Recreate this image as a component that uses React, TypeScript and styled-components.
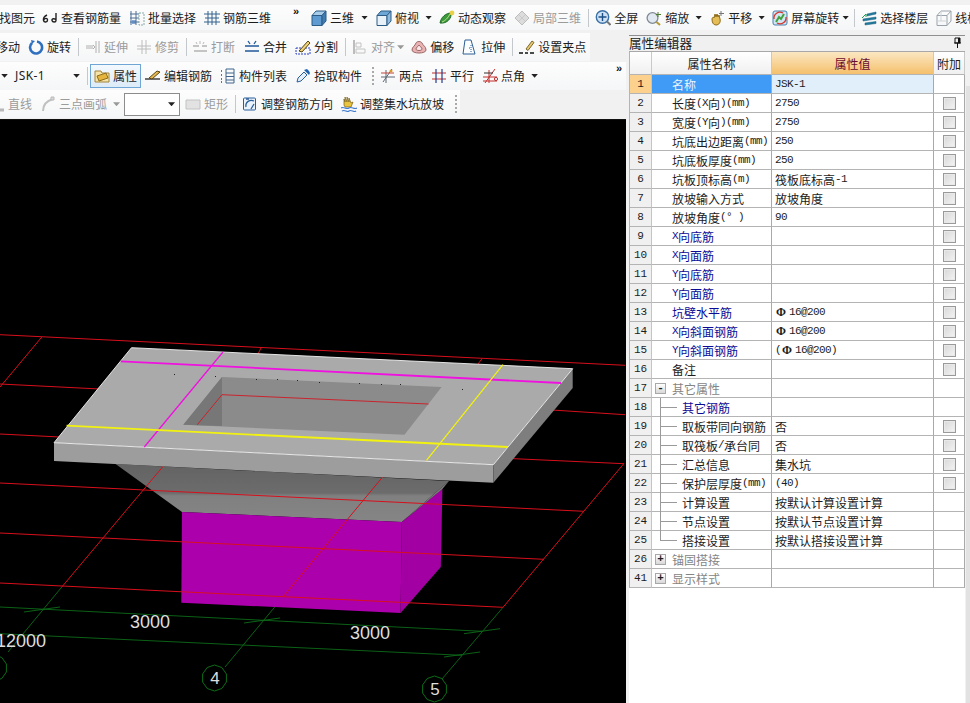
import React from "react";
import styled, { createGlobalStyle } from "styled-components";

const Global = createGlobalStyle`
  html, body { margin: 0; padding: 0; background: #f0f0f0; }
  #root { width: 970px; height: 703px; overflow: hidden; }
  * { box-sizing: border-box; }
`;

const CJK = `"Noto Sans CJK SC", "Liberation Sans", sans-serif`;

const Page = styled.div`
  width: 970px;
  height: 703px;
  overflow: hidden;
  display: flex;
  flex-direction: column;
  font-family: ${CJK};
  font-size: 12px;
  color: #1c1c1c;
  background: #f1f1f1;
`;
const TopRow = styled.div`
  height: 33px;
  padding-top: 5px;
  flex: none;
`;
const Body = styled.div`
  flex: 1;
  display: flex;
  min-height: 0;
`;
const LeftColumn = styled.div`
  width: 626px;
  flex: none;
  display: flex;
  flex-direction: column;
  overflow: hidden;
`;
const Strip = styled.div<{ $w: number; $h: number }>`
  width: ${(p) => p.$w}px;
  height: ${(p) => p.$h}px;
  flex: none;
  display: flex;
  align-items: center;
  white-space: nowrap;
  overflow: hidden;
  background: linear-gradient(#fdfdfd, #f5f6f7);
`;
const ToolRow = styled.div`
  height: 28.5px;
  flex: none;
  display: flex;
  align-items: center;
`;
const Tool = styled.div<{ $gap: number; $active?: boolean; $off?: boolean }>`
  margin-left: ${(p) => p.$gap}px;
  flex: none;
  display: flex;
  align-items: center;
  gap: 3px;
  line-height: 16px;
  color: ${(p) => (p.$off ? "#9b9b9b" : "#1c1c1c")};
  ${(p) =>
    p.$active
      ? `padding: 3px 3px; border: 1px solid #6fa6d6; background: linear-gradient(#f4f9fe, #dcebf8);`
      : ""}
`;
const IconBox = styled.svg`
  width: 16px;
  height: 16px;
  flex: none;
  display: block;
`;
const Caret = styled.span<{ $gap: number; $off?: boolean }>`
  margin-left: ${(p) => p.$gap}px;
  flex: none;
  width: 7px;
  height: 4px;
  clip-path: polygon(0 0, 100% 0, 50% 100%);
  background: ${(p) => (p.$off ? "#999" : "#222")};
`;
const Sep = styled.span<{ $gap: number }>`
  margin-left: ${(p) => p.$gap}px;
  width: 1px;
  height: 18px;
  flex: none;
  background: #c4c8cc;
`;
const Grip = styled.span<{ $gap: number }>`
  margin-left: ${(p) => p.$gap}px;
  width: 2px;
  height: 18px;
  flex: none;
  background: repeating-linear-gradient(#a9a9a9 0 2px, transparent 2px 4px);
`;
const Chevron = styled.span<{ $gap: number }>`
  margin-left: ${(p) => p.$gap}px;
  width: 8px;
  flex: none;
  align-self: flex-start;
  margin-top: 1px;
  font: bold 11px/10px "Liberation Sans", sans-serif;
  color: #111;
`;
const ComboText = styled.span<{ $gap: number; $w: number }>`
  margin-left: ${(p) => p.$gap}px;
  width: ${(p) => p.$w}px;
  flex: none;
  font: 12px "Noto Sans", sans-serif;
  letter-spacing: 0.4px;
`;
const Combo = styled.div<{ $gap: number; $w: number }>`
  margin-left: ${(p) => p.$gap}px;
  width: ${(p) => p.$w}px;
  height: 23px;
  flex: none;
  display: flex;
  align-items: center;
  justify-content: flex-end;
  padding-right: 4px;
  background: #fff;
  border: 1px solid #8d8d8d;
`;
const Viewport = styled.div`
  flex: 1;
  min-height: 0;
  background: #000;
  border-top: 1px solid #111;
`;
const Drawing = styled.svg`
  display: block;
  width: 626px;
  height: 585px;
`;

/* right side */
const Panel = styled.div`
  flex: 1;
  display: flex;
  flex-direction: column;
  padding: 2px 0 0 3px;
  position: relative;
`;
const PanelTitle = styled.div`
  height: 16px;
  margin-right: 5px;
  flex: none;
  display: flex;
  align-items: center;
  justify-content: space-between;
  padding: 0 3px 2px 0;
  border-top: 1px solid #8f8f8f;
  font-size: 12.6px;
  line-height: 14px;
  background: #f0f0f0;
`;
const PanelBody = styled.div`
  flex: 1;
  margin-right: 5px;
  background: #fff;
  border-top: 1px solid #a8a8a8;
`;
const ScrollEdge = styled.div`
  position: absolute;
  top: 53px;
  right: 0;
  bottom: 0;
  width: 4px;
  background: #e2e2e2;
`;
const Grid = styled.div`
  display: grid;
  grid-template-columns: 22px 120px 162px 31px;
  grid-template-rows: 23px;
  grid-auto-rows: 19px;
  border-left: 1px solid #b4b4b4;
  width: 336px;
`;
const HeadCell = styled.div<{ $hot?: boolean }>`
  height: 23px;
  display: flex;
  align-items: center;
  justify-content: center;
  border-right: 1px solid #c9c9c9;
  border-bottom: 1px solid #b4b4b4;
  color: ${(p) => (p.$hot ? "#6b0a2e" : "#1c1c1c")};
  background: ${(p) =>
    p.$hot
      ? "linear-gradient(#fbe7c3, #f4c06c)"
      : "linear-gradient(#ffffff, #f0f0f0)"};
`;
const NumCell = styled.div<{ $on?: boolean }>`
  display: flex;
  align-items: center;
  justify-content: center;
  font: 11px "Liberation Mono", monospace;
  background: ${(p) => (p.$on ? "#fcd18e" : "#f0f0f0")};
  border-right: 1px solid #c4c4c4;
  border-bottom: 1px solid #b4b4b4;
`;
const NameCell = styled.div<{ $kind: string; $indent: number; $on?: boolean }>`
  display: flex;
  align-items: center;
  position: relative;
  padding-left: ${(p) => p.$indent}px;
  white-space: nowrap;
  border-right: 1px solid #a9a9a9;
  border-bottom: 1px solid #b4b4b4;
  background: ${(p) => (p.$on ? "#3f9bf5" : "#fff")};
  color: ${(p) =>
    p.$on ? "#eaf4ff" : p.$kind === "blue" ? "#0b0b96" : p.$kind === "group" ? "#858585" : "#1c1c1c"};
`;
const ValueCell = styled.div<{ $on?: boolean }>`
  display: flex;
  align-items: center;
  padding-left: 3px;
  white-space: pre;
  border-right: 1px solid #a9a9a9;
  border-bottom: 1px solid #b4b4b4;
  background: ${(p) => (p.$on ? "#e1effb" : "#fff")};
`;
const ExtraCell = styled.div`
  display: flex;
  align-items: center;
  justify-content: center;
  border-right: 1px solid #a9a9a9;
  border-bottom: 1px solid #b4b4b4;
  background: #fff;
`;
const Check = styled.span`
  width: 13px;
  height: 13px;
  border: 1px solid #9a9a9a;
  background: linear-gradient(135deg, #d8d8d8, #f4f4f4);
  box-shadow: inset 0 0 0 1px #e9e9e9;
`;
const Latin = styled.span`
  font: 11px "Liberation Mono", monospace;
  letter-spacing: -0.6px;
`;
const Rebar = styled.span`
  font: bold 12px "Liberation Serif", serif;
  margin: 0 3px 0 1px;
`;
const Expander = styled.span`
  position: absolute;
  left: 3px;
  top: 4px;
  width: 11px;
  height: 11px;
  border: 1px solid #a8a8a8;
  background: linear-gradient(#fff, #d8d8d8);
  font: bold 11px/9px "Liberation Mono", monospace;
  text-align: center;
  color: #222;
`;
const TreeV = styled.span<{ $last?: boolean }>`
  position: absolute;
  left: 8px;
  top: 0;
  height: ${(p) => (p.$last ? 10 : 19)}px;
  width: 1px;
  background: #9a9a9a;
`;
const TreeH = styled.span`
  position: absolute;
  left: 8px;
  top: 9px;
  width: 17px;
  height: 1px;
  background: #9a9a9a;
`;

const I = (p: { children: React.ReactNode }) => (
  <IconBox viewBox="0 0 16 16" fill="none">{p.children}</IconBox>
);

const cube = (front: string, top: string, side: string) => (
  <I>
    <path d="M1 5.5h10v10H1z" fill={front} stroke="#2c5c86" />
    <path d="M1 5.5 5 1h10l-4 4.5z" fill={top} stroke="#2c5c86" />
    <path d="M11 5.5 15 1v10l-4 4.5z" fill={side} stroke="#2c5c86" />
  </I>
);

const icons: Record<string, React.ReactNode> = {
  glasses: (
    <I>
      <path d="M5 5C3 6 1 8 1.5 10.5c.5 2 4 2 4-.5s-3-2-4 .5M14 3v7.5c0 2-3.5 2-4 0s3-2.5 4-.5" stroke="#222" strokeWidth="1.4" />
    </I>
  ),
  batch: (
    <I>
      <path d="M2 1v14M7 1v14M1 4h9M1 8h9M1 12h9" stroke="#4d6f95" />
      <path d="M10 3h5v12h-5z" stroke="#8aa" strokeDasharray="2 1" />
      <path d="M3 10h4v4H3z" fill="#3a72b8" opacity=".6" />
    </I>
  ),
  rebar: (
    <I>
      <path d="M4 1v14M8 1v14M12 1v14M0 4h16M0 12h16M1 8h14" stroke="#34638f" />
    </I>
  ),
  cube: cube("#5f9bd0", "#a9cde9", "#3f7cb2"),
  top: cube("#e8f1f8", "#6ea6d6", "#8fbade"),
  orbit: (
    <I>
      <path d="M1 13C2 7 7 3 12 3c1 5-4 11-11 10z" fill="#3d9a3a" stroke="#1d6a2a" />
      <path d="M3 12c3-1 6-4 8-8" stroke="#b7e08a" />
      <circle cx="13" cy="3" r="2.4" fill="#e8d24a" />
    </I>
  ),
  local: (
    <I>
      <path d="M8 1l7 7-7 7-7-7z" fill="#dcdcdc" stroke="#bdbdbd" />
      <path d="M5 5l6 6M11 5l-6 6" stroke="#c9c9c9" />
    </I>
  ),
  full: (
    <I>
      <circle cx="7.5" cy="7" r="6.2" fill="#cfe2f4" stroke="#3a6fa5" strokeWidth="1.4" />
      <path d="M7.5 3v8M3.5 7h8" stroke="#1e4f86" strokeWidth="1.4" />
      <path d="M12 11.5l3.5 3.5" stroke="#777" strokeWidth="2" />
    </I>
  ),
  zoom: (
    <I>
      <circle cx="6.5" cy="8" r="5.4" fill="#e2e8ef" stroke="#808a96" strokeWidth="1.3" />
      <path d="M10.5 12l3.5 3" stroke="#b59a35" strokeWidth="2" />
      <path d="M12 2v5M10 4.5h5" stroke="#4c7a2e" />
    </I>
  ),
  pan: (
    <I>
      <path d="M3 9c0-2 2-2 2-1l1-4 1 3 1-3 1 3 1-2 1 4c1 3-1 6-4 6s-4-3-4-6z" fill="#e4bd56" stroke="#8e6c1c" />
      <path d="M12 1v5M10 3.5h5" stroke="#777" />
    </I>
  ),
  rotscreen: (
    <I>
      <rect x="1" y="1" width="14" height="14" rx="2" fill="#cfe6f4" stroke="#4a80b0" />
      <path d="M4 12l3-5 2 2 3-5" stroke="#44a03c" strokeWidth="2" />
      <path d="M2 9a6 6 0 0 1 9-6M14 7a6 6 0 0 1-9 6" stroke="#d8352b" strokeWidth="1.3" />
    </I>
  ),
  floors: (
    <I>
      <path d="M6 4l9-2v2l-9 2zM2 9l13-2v2L2 11zM4 13l11-1.500v2L4 15z" fill="#1f7a9c" stroke="#1a5f80" strokeWidth=".5" />
      <path d="M1 8l4-4v3" stroke="#1e9c52" />
    </I>
  ),
  wire: (
    <I>
      <path d="M1 5.500h10v10H1zM1 5.500 5 1h10l-4 4.500M15 1v10l-4 4.500" stroke="#9aa3ab" />
      <path d="M5 1v10H1M5 11l6 0" stroke="#cfd4d8" />
    </I>
  ),
  rotate: (
    <I>
      <path d="M9 2.500a6 6 0 1 1-5 1.500" stroke="#2f6fc0" strokeWidth="2.600" />
      <path d="M3 1l4 1-3 3z" fill="#2f6fc0" />
    </I>
  ),
  extend: (
    <I>
      <path d="M1 7h7M1 9h7M11 2v12M14 2v12" stroke="#b0b0b0" />
      <path d="M8 6l2 2-2 2" stroke="#b0b0b0" />
    </I>
  ),
  trim: (
    <I>
      <path d="M6 1v14M10 1v14M1 7h14M1 10h14" stroke="#bdbdbd" />
    </I>
  ),
  breakI: (
    <I>
      <path d="M1 7h6M10 7h5M2 12h13" stroke="#b3b3b3" strokeWidth="1.500" />
      <path d="M8 2v3M4 3l1 2M12 3l-1 2" stroke="#bbb" />
    </I>
  ),
  merge: (
    <I>
      <path d="M1 7h14M1 12h14" stroke="#21589a" strokeWidth="1.500" />
      <path d="M4 2l2 3M12 2l-2 3" stroke="#21589a" strokeWidth="1.300" />
    </I>
  ),
  split: (
    <I>
      <path d="M1 9h14v6H1z" stroke="#2b3fc4" strokeDasharray="2 1" />
      <path d="M4 12l9-10 2 2-8 9z" fill="#f1d17a" stroke="#53470f" />
    </I>
  ),
  align: (
    <I>
      <path d="M2 1v14" stroke="#a8a8a8" strokeWidth="1.500" />
      <path d="M4 4h5v4H4zM4 10h9v4H4z" stroke="#c2c2c2" />
    </I>
  ),
  offset: (
    <I>
      <path d="M1 11c0-3 3-4 4-7 1-2 5-2 6 0 1 3 4 3 4 7s-14 4-14 0z" fill="#e9b3b3" stroke="#9b6767" />
      <path d="M5 10c0-2 2-2 3-4 1 2 3 2 3 4s-6 2-6 0z" fill="#f9e7e7" stroke="#9b6767" />
    </I>
  ),
  stretch: (
    <I>
      <path d="M3 1h6l4 14H1z" fill="#fbfdff" stroke="#2d5e94" />
      <path d="M9 6v7M7 9h1" stroke="#2d5e94" strokeDasharray="1 1" />
    </I>
  ),
  gripset: (
    <I>
      <path d="M0 14h4M6 14h3M11 14h4" stroke="#111" strokeWidth="1.600" />
      <path d="M7 10l6-8 2 1.500-6 8z" fill="#e8c872" stroke="#7b6a2c" />
    </I>
  ),
  props: (
    <I>
      <path d="M1 3h6l1 2h7v9H1z" fill="#f6e3a8" stroke="#a1843a" />
      <path d="M3 8l9-3 2 5-9 3z" fill="#e5b43f" stroke="#8e6d1a" />
    </I>
  ),
  edit: (
    <I>
      <path d="M0 11h15" stroke="#222" strokeWidth="1.300" />
      <path d="M4 10l8-7 3 1-8 7z" fill="#e2b84f" stroke="#5b4716" />
    </I>
  ),
  list: (
    <I>
      <path d="M1 3h2M1 7h2M1 11h2M1 14h2" stroke="#444" strokeDasharray="1 1" strokeWidth="1.500" />
      <path d="M6 1h8v14H6zM6 5h8M6 8.500h8M6 12h8" stroke="#41648c" />
    </I>
  ),
  pick: (
    <I>
      <path d="M2 14l1-4 6-6 3 3-6 6z" fill="#e6f0fb" stroke="#2a5f9e" />
      <path d="M9 2l5 5 1-2-1-2-2-2z" fill="#1f62b0" />
    </I>
  ),
  twopt: (
    <I>
      <path d="M1 9h14M3 14 12 1M6 2v13" stroke="#5c6873" />
      <path d="M1 5h13" stroke="#c2453c" />
      <circle cx="11" cy="3" r="1.500" fill="#d59a2a" />
    </I>
  ),
  parallel: (
    <I>
      <path d="M1 5h14M1 11h14" stroke="#c0302f" strokeWidth="1.200" />
      <path d="M5 1v14M11 1v14" stroke="#243e8f" strokeWidth="1.200" />
    </I>
  ),
  angle: (
    <I>
      <path d="M1 9h14M1 13h14M3 15 13 1M7 2v13" stroke="#c0302f" />
      <path d="M2 5h9" stroke="#333" />
      <circle cx="14" cy="11" r="1.600" stroke="#c0302f" />
    </I>
  ),
  line: (
    <I>
      <path d="M10 14h5" stroke="#b8b8b8" strokeWidth="3" />
    </I>
  ),
  arc: (
    <I>
      <path d="M3 15c0-6 3-10 10-12" stroke="#c0c0c0" strokeWidth="2" />
      <path d="M11 1h3v3h-3z" fill="#d8d8d8" stroke="#bbb" />
    </I>
  ),
  rect: (
    <I>
      <path d="M1 4h14v9H1z" fill="#e2e2e2" stroke="#c2c2c2" />
    </I>
  ),
  adjust: (
    <I>
      <rect x="1.500" y="2" width="12" height="12" rx="1" fill="#eaf3fb" stroke="#2b5e99" />
      <path d="M4 11c-1-5 4-8 8-6M12 8 9 13M4 3l3 0" stroke="#2b5e99" strokeWidth="1.300" />
    </I>
  ),
  sump: (
    <I>
      <path d="M3 9V3l1 3V1l2 5V1l2 5V2l2 5 2-1-2 5H4z" fill="#e9c440" stroke="#7a5f11" strokeWidth=".7" />
      <path d="M0 12c3-2 5 2 8 0s5 2 8 0M1 15c3-2 5 2 7 0s5 2 7 0" stroke="#3f7bd0" strokeWidth="1.200" />
    </I>
  ),
};

type Item =
  | { t: "tool"; g: number; l?: string; i?: string; off?: boolean; on?: boolean }
  | { t: "caret"; g: number; off?: boolean }
  | { t: "sep"; g: number }
  | { t: "grip"; g: number }
  | { t: "chev"; g: number }
  | { t: "text"; g: number; l: string; w: number }
  | { t: "combo"; g: number; w: number };

const tool = (g: number, l?: string, i?: string, off?: boolean, on?: boolean): Item => ({ t: "tool", g, l, i, off, on });
const caret = (g: number, off?: boolean): Item => ({ t: "caret", g, off });
const sep = (g: number): Item => ({ t: "sep", g });
const grip = (g: number): Item => ({ t: "grip", g });
const chev = (g: number): Item => ({ t: "chev", g });

const row1: Item[] = [
  tool(-1, "找图元"), tool(7, "查看钢筋量", "glasses"), tool(8, "批量选择", "batch"), tool(8, "钢筋三维", "rebar"),
  chev(22), tool(10, "三维", "cube"), caret(7), tool(8, "俯视", "top"), caret(6), tool(7, "动态观察", "orbit"),
  tool(8, "局部三维", "local", true), sep(7), tool(6, "全屏", "full"), tool(8, "缩放", "zoom"), caret(6),
  tool(7, "平移", "pan"), caret(6), tool(7, "屏幕旋转", "rotscreen"), caret(3), sep(5), tool(6, "选择楼层", "floors"),
  tool(8, "线框", "wire"),
];
const row2: Item[] = [
  tool(-4, "移动"), tool(8, "旋转", "rotate"), sep(7), tool(6, "延伸", "extend", true), tool(8, "修剪", "trim", true),
  sep(7), tool(5, "打断", "breakI", true), tool(9, "合并", "merge"), tool(8, "分割", "split"), sep(7),
  tool(6, "对齐", "align", true), caret(2, true), tool(7, "偏移", "offset"), tool(8, "拉伸", "stretch"), sep(7),
  tool(6, "设置夹点", "gripset"),
];
const row3: Item[] = [
  caret(1), { t: "text", g: 7, l: "JSK-1", w: 58 }, caret(0), sep(7), tool(2, "属性", "props", false, true),
  tool(4, "编辑钢筋", "edit"), tool(8, "构件列表", "list"), tool(8, "拾取构件", "pick"), grip(10),
  tool(6, "两点", "twopt"), tool(8, "平行", "parallel"), tool(8, "点角", "angle"), caret(6), chev(78),
];
const row4: Item[] = [
  tool(-11, "直线", "line", true), tool(8, "三点画弧", "arc", true), caret(6, true), { t: "combo", g: 4, w: 56 },
  tool(5, "矩形", "rect", true), sep(7), tool(6, "调整钢筋方向", "adjust"), tool(8, "调整集水坑放坡", "sump"), grip(11),
];

const renderItem = (it: Item, k: number) => {
  switch (it.t) {
    case "tool":
      return (
        <Tool key={k} $gap={it.g} $off={it.off} $active={it.on}>
          {it.i ? icons[it.i] : null}
          {it.l}
        </Tool>
      );
    case "caret":
      return <Caret key={k} $gap={it.g} $off={it.off} />;
    case "sep":
      return <Sep key={k} $gap={it.g} />;
    case "grip":
      return <Grip key={k} $gap={it.g} />;
    case "chev":
      return <Chevron key={k} $gap={it.g}>»</Chevron>;
    case "text":
      return <ComboText key={k} $gap={it.g} $w={it.w}>{it.l}</ComboText>;
    case "combo":
      return (
        <Combo key={k} $gap={it.g} $w={it.w}>
          <Caret $gap={0} />
        </Combo>
      );
  }
};

/* ascii runs get the narrow font of the original grid */
const mixed = (s: string) =>
  s.split(/([\x20-\x7e°]+)/).map((part, i) =>
    /^[\x20-\x7e°]+$/.test(part) ? <Latin key={i}>{part}</Latin> : <span key={i}>{part}</span>
  );

type Row = {
  n: number;
  name: string;
  value?: string;
  kind?: "blue" | "group" | "plain";
  check?: boolean;
  tree?: boolean;
  last?: boolean;
  exp?: "+" | "-";
};

const rows: Row[] = [
  { n: 1, name: "名称", value: "JSK-1" },
  { n: 2, name: "长度(X向)(mm)", value: "2750", check: true },
  { n: 3, name: "宽度(Y向)(mm)", value: "2750", check: true },
  { n: 4, name: "坑底出边距离(mm)", value: "250", check: true },
  { n: 5, name: "坑底板厚度(mm)", value: "250", check: true },
  { n: 6, name: "坑板顶标高(m)", value: "筏板底标高-1", check: true },
  { n: 7, name: "放坡输入方式", value: "放坡角度", check: true },
  { n: 8, name: "放坡角度(° )", value: "90", check: true },
  { n: 9, name: "X向底筋", kind: "blue", check: true },
  { n: 10, name: "X向面筋", kind: "blue", check: true },
  { n: 11, name: "Y向底筋", kind: "blue", check: true },
  { n: 12, name: "Y向面筋", kind: "blue", check: true },
  { n: 13, name: "坑壁水平筋", kind: "blue", value: "@1", check: true },
  { n: 14, name: "X向斜面钢筋", kind: "blue", value: "@1", check: true },
  { n: 15, name: "Y向斜面钢筋", kind: "blue", value: "@2", check: true },
  { n: 16, name: "备注", check: true },
  { n: 17, name: "其它属性", kind: "group", exp: "-" },
  { n: 18, name: "其它钢筋", kind: "blue", tree: true },
  { n: 19, name: "取板带同向钢筋", value: "否", check: true, tree: true },
  { n: 20, name: "取筏板/承台同", value: "否", check: true, tree: true },
  { n: 21, name: "汇总信息", value: "集水坑", check: true, tree: true },
  { n: 22, name: "保护层厚度(mm)", value: "(40)", check: true, tree: true },
  { n: 23, name: "计算设置", value: "按默认计算设置计算", tree: true },
  { n: 24, name: "节点设置", value: "按默认节点设置计算", tree: true },
  { n: 25, name: "搭接设置", value: "按默认搭接设置计算", tree: true, last: true },
  { n: 26, name: "锚固搭接", kind: "group", exp: "+" },
  { n: 41, name: "显示样式", kind: "group", exp: "+" },
];

const renderValue = (v?: string) => {
  if (!v) return null;
  if (v === "@1")
    return (
      <>
        <Rebar>Φ</Rebar>
        <Latin>16@200</Latin>
      </>
    );
  if (v === "@2")
    return (
      <>
        <Latin>(</Latin>
        <Rebar>Φ</Rebar>
        <Latin>16@200)</Latin>
      </>
    );
  return mixed(v);
};

const dots: [number, number][] = [
  [174, 372], [215, 374], [256, 377], [277, 377], [297, 378], [319, 380],
  [359, 381], [381, 382], [400, 382], [462, 387],
];
const reds: [number, number, number, number][] = [
  [0, 332.7, 625, 363.3],
  [0, 382, 100, 387],
  [552, 408, 625, 412.7],
  [0, 432, 60, 435],
  [510, 456.5, 624, 461.7],
  [0, 481, 584, 509.3],
  [0, 531, 544, 557.3],
  [0, 581, 503, 605.3],
  [41.800, 335, 0, 385],
  [163.400, 464, 61.800, 585],
  [382.600, 475, 283, 595],
  [623.800, 461.700, 503, 605.300],
  [261, 346, 258, 352],
  [482, 356.700, 478, 362],
];
const greens: [number, number, number, number][] = [
  [0, 605, 482, 629.300],
  [0, 631.700, 462, 653.300],
  [24, 610, 60, 605],
  [244, 621, 280, 616],
  [464, 631.700, 500, 626.700],
  [444, 655, 480, 650],
  [61.800, 585, 8, 650],
  [283, 595, 225, 665],
  [503, 605.300, 442, 677],
];

const octagon = (cx: number, cy: number) => {
  const pts: string[] = [];
  for (let i = 0; i < 10; i++) {
    const a = (Math.PI * 2 * i) / 10 + Math.PI / 10;
    pts.push(`${(cx + 12.500 * Math.cos(a)).toFixed(1)},${(cy + 13 * Math.sin(a)).toFixed(1)}`);
  }
  return pts.join(" ");
};

const Scene = () => (
  <Drawing viewBox="0 118 626 585">
    <defs>
      <linearGradient id="funnel" x1="0" y1="0" x2="0" y2="1">
        <stop offset="0" stopColor="#636363" />
        <stop offset="0.5" stopColor="#6c6c6c" />
        <stop offset="0.55" stopColor="#808080" />
        <stop offset="1" stopColor="#858585" />
      </linearGradient>
    </defs>
    {greens.map((l, i) => (
      <line key={i} x1={l[0]} y1={l[1]} x2={l[2]} y2={l[3]} stroke="#0c6c18" strokeWidth="0.9" />
    ))}
    <polygon points="115.600,462 449,479 401.800,520 182,510" fill="url(#funnel)" />
    <polygon points="182,510 401.800,520 400.600,611 181.300,600.700" fill="#ad00ad" />
    <polygon points="401.800,520 442.400,486.700 440.800,565 400.600,611" fill="#a300a3" />
    <polygon points="449,479 442.400,487 401.800,520" fill="#7c7c7c" />
    {reds.map((l, i) => (
      <line key={i} x1={l[0]} y1={l[1]} x2={l[2]} y2={l[3]} stroke="#d80f1c" strokeWidth="1" />
    ))}
    <polygon points="54,440.700 493.400,462.700 493.400,480.700 54,459" fill="#9d9d9d" />
    <polygon points="493.400,462.700 572.700,366.700 572.700,386 493.400,480.700" fill="#7e7e7e" />
    <polygon points="54,440.700 131.500,345.700 572.700,366.700 493.400,462.700" fill="#aaaaaa" />
    <polygon points="222,375 441.600,385 404.500,432.700 183.300,422.700" fill="#8b8b8b" />
    <polygon points="222,375 222,424 183.300,422.700" fill="#777777" />
    <polyline points="428.500,402 222,392.700 197.300,422.700" stroke="#d01822" strokeWidth="0.9" fill="none" />
    <polyline points="54,440.700 493.400,462.700 572.700,366.700 131.500,345.700 54,440.700" stroke="#f4f4f4" strokeWidth="0.9" fill="none" />
    <line x1="120.800" y1="359.300" x2="561" y2="381" stroke="#f010e0" strokeWidth="1.800" />
    <line x1="223" y1="350" x2="144.300" y2="445" stroke="#f010e0" strokeWidth="1.300" />
    <line x1="66.600" y1="423.700" x2="508" y2="445" stroke="#f2f210" strokeWidth="1.800" />
    <line x1="503" y1="362.700" x2="426.500" y2="458.300" stroke="#f2f210" strokeWidth="1.300" />
    {dots.map((d, i) => (
      <rect key={i} x={d[0]} y={d[1]} width="1" height="1" fill="#222" />
    ))}
    <g fontFamily='"Liberation Sans", sans-serif' fontSize="18" fill="#dedede">
      <text x="130" y="626">3000</text>
      <text x="350" y="637">3000</text>
      <text x="46" y="645" textAnchor="end">12000</text>
      <text x="215" y="682" textAnchor="middle" fontSize="17">4</text>
      <text x="435" y="693" textAnchor="middle" fontSize="17">5</text>
    </g>
    <polygon points={octagon(214.500, 676)} stroke="#0c6c18" fill="none" />
    <polygon points={octagon(434.500, 687)} stroke="#0c6c18" fill="none" />
    <polygon points={octagon(-5.500, 666)} stroke="#0c6c18" fill="none" />
  </Drawing>
);

export default function App() {
  return (
    <Page>
      <Global />
      <TopRow>
        <Strip $w={970} $h={25}>{row1.map(renderItem)}</Strip>
      </TopRow>
      <Body>
        <LeftColumn>
          <ToolRow>
            <Strip $w={590} $h={28}>{row2.map(renderItem)}</Strip>
          </ToolRow>
          <ToolRow>
            <Strip $w={626} $h={28}>{row3.map(renderItem)}</Strip>
          </ToolRow>
          <ToolRow>
            <Strip $w={460} $h={28}>{row4.map(renderItem)}</Strip>
          </ToolRow>
          <Viewport>
            <Scene />
          </Viewport>
        </LeftColumn>
        <Panel>
          <PanelTitle>
            属性编辑器
            <svg width="9" height="11" viewBox="0 0 9 11">
              <path d="M2 1h5v5H2zM1 6h7M4.500 6v5" stroke="#111" fill="none" />
              <path d="M5 1h2v5H5z" fill="#111" />
            </svg>
          </PanelTitle>
          <PanelBody>
            <Grid>
              <HeadCell />
              <HeadCell>属性名称</HeadCell>
              <HeadCell $hot>属性值</HeadCell>
              <HeadCell>附加</HeadCell>
              {rows.map((r) => {
                const on = r.n === 1;
                return (
                  <React.Fragment key={r.n}>
                    <NumCell $on={on}>{r.n}</NumCell>
                    <NameCell
                      $on={on}
                      $kind={r.kind ?? "plain"}
                      $indent={r.exp ? 20 : r.tree ? 30 : 20}
                    >
                      {r.exp ? <Expander>{r.exp}</Expander> : null}
                      {r.tree ? (
                        <>
                          <TreeV $last={r.last} />
                          <TreeH />
                        </>
                      ) : null}
                      {mixed(r.name)}
                    </NameCell>
                    <ValueCell $on={on}>{renderValue(r.value)}</ValueCell>
                    <ExtraCell>{r.check ? <Check /> : null}</ExtraCell>
                  </React.Fragment>
                );
              })}
            </Grid>
          </PanelBody>
          <ScrollEdge />
        </Panel>
      </Body>
    </Page>
  );
}
